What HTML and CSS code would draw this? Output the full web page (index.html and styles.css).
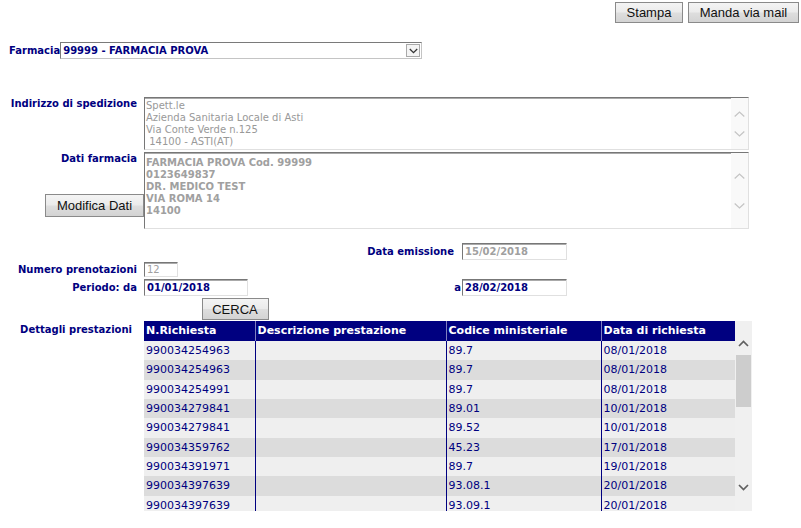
FILE: index.html
```html
<!DOCTYPE html>
<html>
<head>
<meta charset="utf-8">
<link rel="stylesheet" href="styles.css">
</head>
<body>
<div class="topbar">
  <button class="btn btn-stampa">Stampa</button>
  <button class="btn btn-mail">Manda via mail</button>
</div>

<div class="farm-row">
  <span class="lbl">Farmacia</span>
  <div class="select">
    <span class="select-val">99999 - FARMACIA PROVA</span>
    <span class="select-arrow"><svg width="9" height="6" viewBox="0 0 9 6"><polyline points="0.8,1 4.5,4.6 8.2,1" fill="none" stroke="#333" stroke-width="1.3"/></svg></span>
  </div>
</div>

<div class="form1">
  <div class="lcell"><span class="lbl">Indirizzo di spedizione</span></div>
  <div class="ta ta-addr">
    <div class="ta-text">Spett.le<br>Azienda Sanitaria Locale di Asti<br>Via Conte Verde n.125<br>&nbsp;14100 - ASTI(AT)</div>
    <div class="ta-scroll">
      <svg width="11" height="6" viewBox="0 0 11 6"><polyline points="0.7,5.5 5.5,1 10.3,5.5" fill="none" stroke="#c4c4c4" stroke-width="1.2"/></svg>
      <svg width="11" height="6" viewBox="0 0 11 6"><polyline points="0.7,0.5 5.5,5 10.3,0.5" fill="none" stroke="#c4c4c4" stroke-width="1.2"/></svg>
    </div>
  </div>

  <div class="lcell lcell-dati">
    <span class="lbl">Dati farmacia</span>
    <button class="btn btn-mod">Modifica Dati</button>
  </div>
  <div class="ta ta-dati">
    <div class="ta-text ta-bold">FARMACIA PROVA Cod. 99999<br>0123649837<br>DR. MEDICO TEST<br>VIA ROMA 14<br>14100</div>
    <div class="ta-scroll">
      <svg width="11" height="6" viewBox="0 0 11 6"><polyline points="0.7,5.5 5.5,1 10.3,5.5" fill="none" stroke="#c4c4c4" stroke-width="1.2"/></svg>
      <svg width="11" height="6" viewBox="0 0 11 6"><polyline points="0.7,0.5 5.5,5 10.3,0.5" fill="none" stroke="#c4c4c4" stroke-width="1.2"/></svg>
    </div>
  </div>
</div>

<div class="form2">
  <div class="c1"></div>
  <div class="c2"></div>
  <div class="c3"><span class="lbl">Data emissione</span></div>
  <div class="c4"><div class="inp inp-dis">15/02/2018</div></div>

  <div class="c1"><span class="lbl">Numero prenotazioni</span></div>
  <div class="c2"><div class="inp inp-num">12</div></div>
  <div class="c3"></div>
  <div class="c4"></div>

  <div class="c1"><span class="lbl">Periodo: da</span></div>
  <div class="c2"><div class="inp inp-da">01/01/2018</div></div>
  <div class="c3 c3-a"><span class="lbl">a</span></div>
  <div class="c4"><div class="inp">28/02/2018</div></div>

  <div class="c1"></div>
  <div class="c2 c2-center"><button class="btn btn-cerca">CERCA</button></div>
  <div class="c3"></div>
  <div class="c4"></div>

  <div class="c1 c1-top"><span class="lbl">Dettagli prestazioni</span></div>
  <div class="tbl-wrap">
    <div class="tbl-inner">
      <table class="grid">
        <colgroup><col class="w1"><col class="w2"><col class="w3"><col class="w4"></colgroup>
        <thead>
          <tr><th>N.Richiesta</th><th>Descrizione prestazione</th><th>Codice ministeriale</th><th>Data di richiesta</th></tr>
        </thead>
        <tbody>
          <tr><td>990034254963</td><td></td><td>89.7</td><td>08/01/2018</td></tr>
          <tr><td>990034254963</td><td></td><td>89.7</td><td>08/01/2018</td></tr>
          <tr><td>990034254991</td><td></td><td>89.7</td><td>08/01/2018</td></tr>
          <tr><td>990034279841</td><td></td><td>89.01</td><td>10/01/2018</td></tr>
          <tr><td>990034279841</td><td></td><td>89.52</td><td>10/01/2018</td></tr>
          <tr><td>990034359762</td><td></td><td>45.23</td><td>17/01/2018</td></tr>
          <tr><td>990034391971</td><td></td><td>89.7</td><td>19/01/2018</td></tr>
          <tr><td>990034397639</td><td></td><td>93.08.1</td><td>20/01/2018</td></tr>
          <tr><td>990034397639</td><td></td><td>93.09.1</td><td>20/01/2018</td></tr>
        </tbody>
      </table>
    </div>
    <div class="vscroll">
      <div class="vs-up"><svg width="11" height="7" viewBox="0 0 11 7"><polyline points="1,6 5.5,1.5 10,6" fill="none" stroke="#606060" stroke-width="1.7"/></svg></div>
      <div class="vs-thumb"></div>
      <div class="vs-gap"></div>
      <div class="vs-down"><svg width="11" height="7" viewBox="0 0 11 7"><polyline points="1,1 5.5,5.5 10,1" fill="none" stroke="#606060" stroke-width="1.7"/></svg></div>
    </div>
  </div>
</div>
</body>
</html>
```

FILE: styles.css
```css
* { box-sizing: border-box; }

body {
  margin: 0;
  width: 801px;
  background: #fff;
  font-family: "DejaVu Sans", Verdana, sans-serif;
  font-size: 10px;
  color: #000080;
}

.topbar {
  display: flex;
  justify-content: flex-end;
  gap: 5px;
  padding: 2px 2px 0 0;
}

.btn {
  font-family: "Liberation Sans", Arial, sans-serif;
  font-size: 13px;
  color: #111;
  border: 1px solid #8a8a8a;
  border-radius: 0;
  background: linear-gradient(#f4f4f4, #ebebeb 48%, #dedede 52%, #d3d3d3);
  padding: 0;
  margin: 0;
  line-height: 1;
}

.btn-stampa { width: 68px; height: 21px; }
.btn-mail { width: 111px; height: 21px; }

.lbl {
  font-weight: bold;
  font-size: 10px;
  line-height: 12px;
  color: #000080;
}

.farm-row {
  display: flex;
  align-items: center;
  height: 17px;
  margin-top: 19px;
  padding-left: 9px;
}

.select {
  width: 362px;
  height: 17px;
  display: flex;
  align-items: center;
  justify-content: space-between;
  border: 1px solid;
  border-color: #7a7a7a #c4c4c4 #c4c4c4 #7a7a7a;
  padding: 0 1px 0 2px;
}

.select-val {
  font-weight: bold;
  font-size: 10px;
  color: #000080;
}

.select-arrow {
  width: 14px;
  height: 13px;
  border: 1px solid #a9a9a9;
  background: #f4f4f4;
  display: flex;
  align-items: center;
  justify-content: center;
}

.form1 {
  display: grid;
  grid-template-columns: 140px 605px;
  column-gap: 4px;
  row-gap: 2px;
  margin-top: 38px;
}

.lcell {
  text-align: right;
  padding-right: 3px;
  padding-top: 1px;
}

.lcell-dati {
  display: flex;
  flex-direction: column;
  align-items: flex-end;
}

.btn-mod {
  width: 99px;
  height: 23px;
  margin-top: 29px;
  margin-right: -7px;
}

.ta {
  display: flex;
  border: 1px solid;
  border-color: #777 #e0e0e0 #e0e0e0 #777;
  box-shadow: inset 0 1px 0 #aaa;
  background: #fff;
}

.ta-addr { height: 53px; }
.ta-dati { height: 77px; }

.ta-text {
  flex: 1;
  padding: 2px 1px 0 1px;
  color: #999;
  font-size: 10px;
  line-height: 12px;
  white-space: nowrap;
}

.ta-bold {
  font-weight: bold;
  color: #a0a0a0;
  padding-top: 4px;
}

.ta-scroll {
  width: 17px;
  background: #f9f9f9;
  display: flex;
  flex-direction: column;
  align-items: center;
  justify-content: center;
}

.ta-addr .ta-scroll { gap: 14px; }
.ta-dati .ta-scroll { gap: 24px; }

.form2 {
  display: grid;
  grid-template-columns: 140px 182px 128px 1fr;
  grid-template-rows: 19px 17px 19px 24px auto;
  column-gap: 4px;
  align-items: center;
  margin-top: 13px;
}

.c1 {
  text-align: right;
  padding-right: 3px;
}

.c1-top {
  align-self: start;
  padding-top: 3px;
  padding-right: 8px;
}

.c3 {
  text-align: right;
  padding-right: 4px;
}

.c3-a {
  padding-right: 0;
  margin-right: -3px;
}

.c2-center {
  display: flex;
  justify-content: center;
}

.inp {
  width: 105px;
  height: 17px;
  border: 1px solid;
  border-color: #777 #e0e0e0 #e0e0e0 #777;
  box-shadow: inset 0 1px 0 #aaa;
  padding: 1px 0 0 2px;
  font-weight: bold;
  font-size: 10px;
  line-height: 14px;
  color: #000080;
}

.inp-dis { color: #a0a0a0; }

.inp-num {
  width: 34px;
  height: 15px;
  font-weight: normal;
  color: #a0a0a0;
  line-height: 12px;
}

.inp-da { width: 104px; }

.btn-cerca {
  width: 67px;
  height: 22px;
}

.tbl-wrap {
  grid-column: 2 / span 3;
  justify-self: start;
  display: flex;
  width: 608px;
  height: 190px;
  overflow: hidden;
}

.tbl-inner {
  width: 591px;
  overflow: hidden;
}

.grid {
  width: 591px;
  border-collapse: collapse;
  table-layout: fixed;
  font-size: 11px;
}

.w1 { width: 111px; }
.w2 { width: 191px; }
.w3 { width: 155px; }
.w4 { width: 134px; }

.grid th {
  background: #000080;
  color: #fff;
  font-weight: bold;
  text-align: left;
  padding: 3px 2px;
  line-height: 14px;
  white-space: nowrap;
}

.grid th + th { border-left: 1px solid #7f7fbf; }

.grid td {
  padding: 3px 2px;
  line-height: 13.33px;
  color: #000080;
  white-space: nowrap;
}

.grid td + td { border-left: 1px solid #000080; }

.grid tbody tr:nth-child(odd) td { background: #efefef; }
.grid tbody tr:nth-child(even) td { background: #dcdcdc; }

.vscroll {
  width: 17px;
  background: #f0f0f0;
  display: flex;
  flex-direction: column;
}

.vs-up {
  height: 34px;
  display: flex;
  align-items: flex-end;
  justify-content: center;
  padding-bottom: 8px;
}

.vs-thumb {
  height: 52px;
  margin: 0 1px;
  background: #cdcdcd;
}

.vs-gap { flex: 1; }

.vs-down {
  height: 32px;
  display: flex;
  align-items: flex-start;
  justify-content: center;
  padding-top: 5px;
}
```
